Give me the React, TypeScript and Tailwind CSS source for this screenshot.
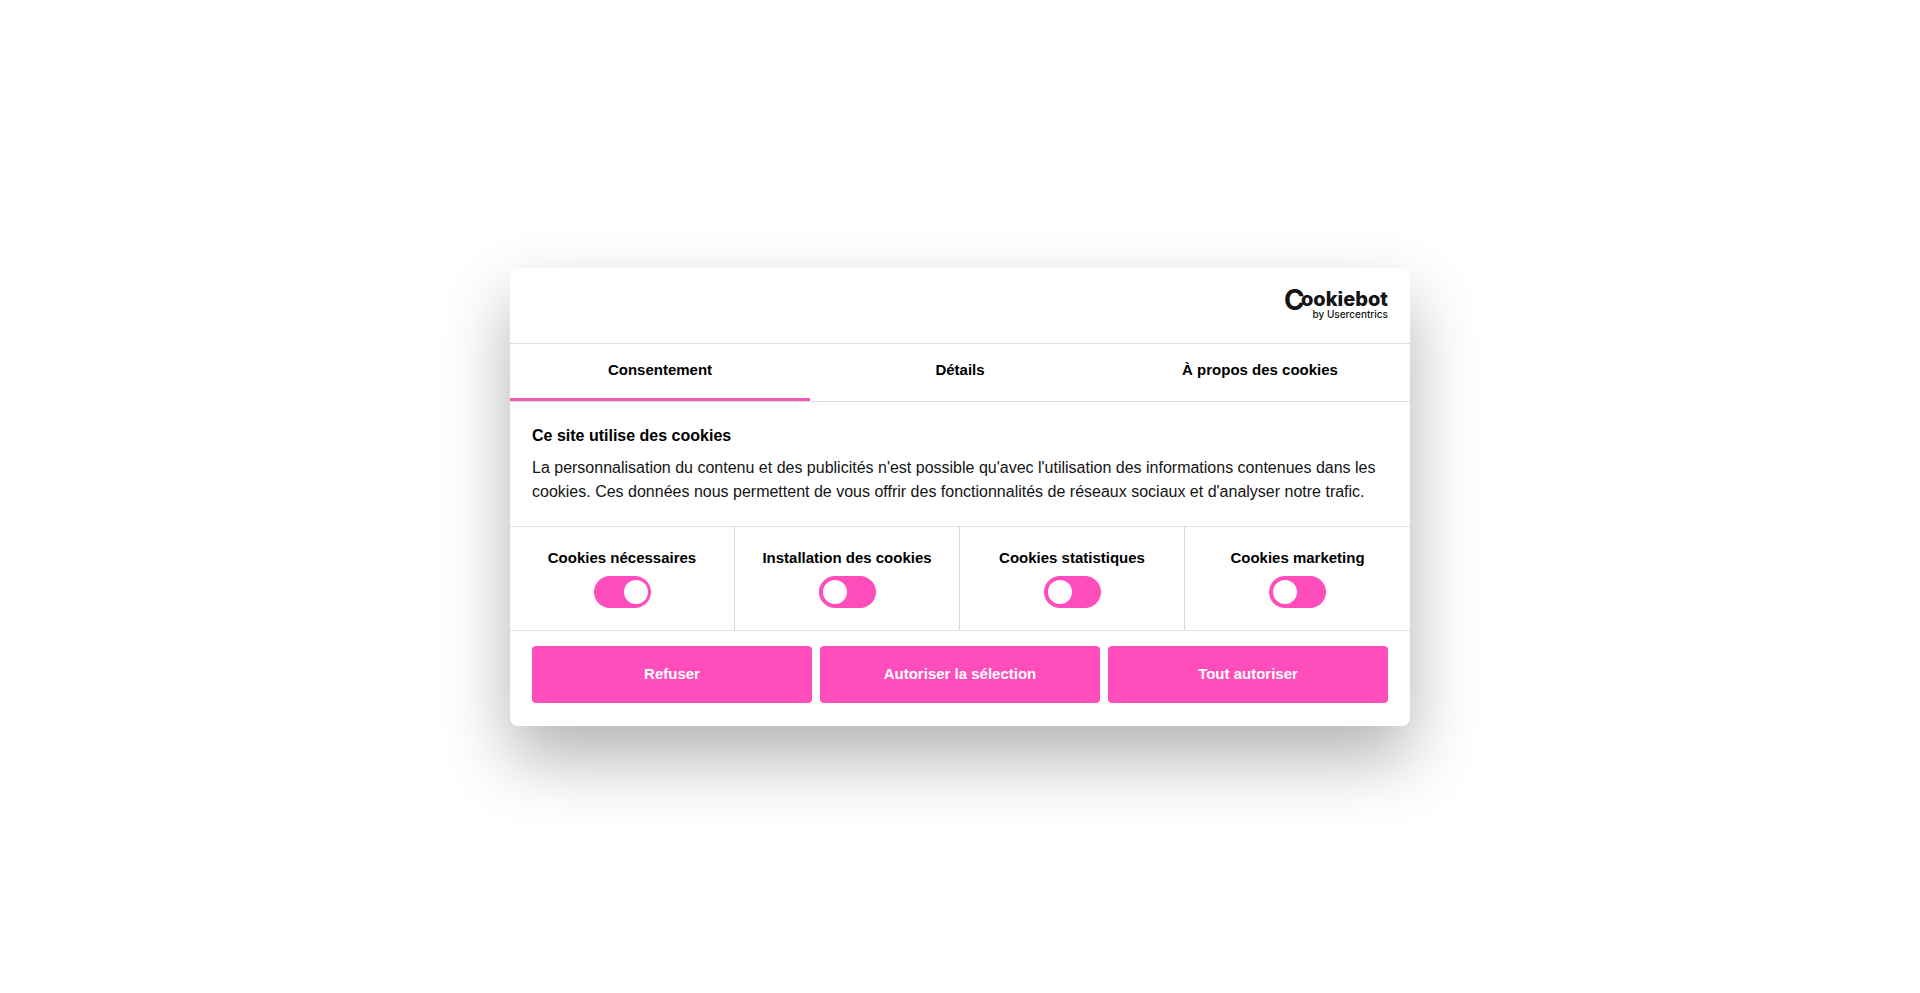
import { useState } from "react";

const tabs = ["Consentement", "Détails", "À propos des cookies"];

const categories = [
  { id: "necessary", label: "Cookies nécessaires", on: true },
  { id: "preferences", label: "Installation des cookies", on: false },
  { id: "statistics", label: "Cookies statistiques", on: false },
  { id: "marketing", label: "Cookies marketing", on: false },
];

const actions = ["Refuser", "Autoriser la sélection", "Tout autoriser"];

function Logo() {
  return (
    <svg
      width="104"
      height="32"
      viewBox="0 0 104 32"
      fill="#141414"
      role="img"
      aria-label="Cookiebot by Usercentrics"
      className="overflow-visible"
    >
      <text x="0" y="20" fontFamily="Inter, sans-serif" fontWeight="700" fontSize="28">
        C
      </text>
      <text x="104" y="16" textAnchor="end" fontFamily="Inter, sans-serif" fontWeight="800" fontSize="20">
        ookiebot
      </text>
      <text x="104" y="28" textAnchor="end" fontFamily="Inter, sans-serif" fontWeight="500" fontSize="10">
        by Usercentrics
      </text>
    </svg>
  );
}

function Toggle({ id, label, initial }: { id: string; label: string; initial: boolean }) {
  const [on, setOn] = useState(initial);
  return (
    <div className="flex flex-col items-center gap-1.5 pt-[19px] pb-[22px]">
      <label htmlFor={id} className="font-bold leading-6">
        {label}
      </label>
      <input
        id={id}
        type="checkbox"
        checked={on}
        onChange={() => setOn(!on)}
        className="block h-8 w-[57px] cursor-pointer appearance-none rounded-full bg-[#ff4dbc] p-1 before:block before:size-6 before:rounded-full before:bg-white checked:before:translate-x-[26px]"
      />
    </div>
  );
}

export default function App() {
  const [active, setActive] = useState(0);
  return (
    <main className="flex min-h-screen items-center justify-center bg-white font-['Liberation_Sans',Arial,sans-serif] text-[15px] text-[#141414]">
      <section
        role="dialog"
        aria-label="Ce site utilise des cookies"
        className="w-full max-w-[900px] rounded-lg bg-white shadow-[0_32px_68px_rgba(0,0,0,0.3)]"
      >
        <header className="flex justify-end border-b border-[#dedede] px-[22px] pt-[22px] pb-[21px]">
          <Logo />
        </header>
        <nav className="grid grid-cols-3 border-b border-[#dedede]" role="tablist">
          {tabs.map((tab, i) => (
            <button
              key={tab}
              role="tab"
              aria-selected={i === active}
              onClick={() => setActive(i)}
              className="h-[57px] cursor-pointer border-b-3 border-transparent font-bold text-black aria-selected:border-[#f058b8]"
            >
              {tab}
            </button>
          ))}
        </nav>
        <div className="px-[22px] pt-[22px] pb-[22px]">
          <h1 className="text-base leading-6 font-bold text-black">Ce site utilise des cookies</h1>
          <p className="mt-2 text-base leading-6">
            La personnalisation du contenu et des publicités n'est possible qu'avec l'utilisation des informations
            contenues dans les cookies. Ces données nous permettent de vous offrir des fonctionnalités de réseaux
            sociaux et d'analyser notre trafic.
          </p>
        </div>
        <div className="grid grid-cols-4 divide-x divide-[#d6d6d6] border-y border-[#e4e4e4] text-black">
          {categories.map((c) => (
            <Toggle key={c.id} id={c.id} label={c.label} initial={c.on} />
          ))}
        </div>
        <footer className="grid grid-cols-3 gap-2 px-[22px] pt-[15px] pb-[23px]">
          {actions.map((a) => (
            <button key={a} className="h-[57px] cursor-pointer rounded bg-[#ff4dbc] font-bold text-white">
              {a}
            </button>
          ))}
        </footer>
      </section>
    </main>
  );
}
